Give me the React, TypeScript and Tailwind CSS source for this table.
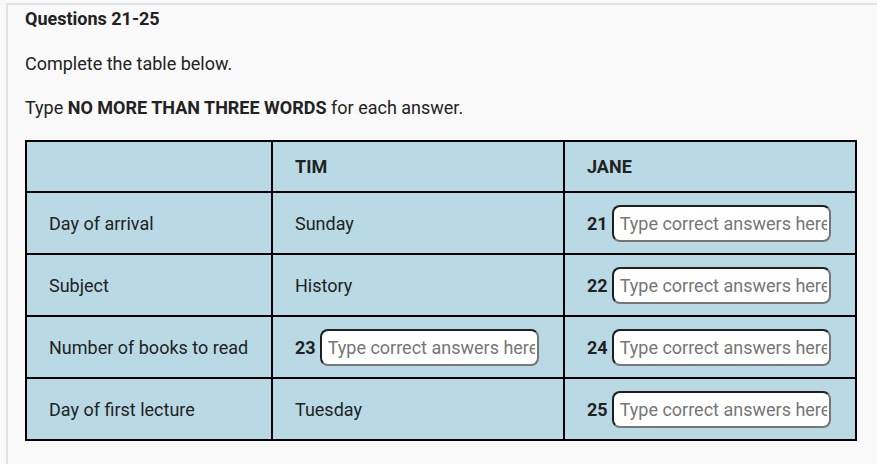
import React from 'react';

type Cell = { text?: string; q?: number };

const rows: { label: string; tim: Cell; jane: Cell }[] = [
  { label: 'Day of arrival', tim: { text: 'Sunday' }, jane: { q: 21 } },
  { label: 'Subject', tim: { text: 'History' }, jane: { q: 22 } },
  { label: 'Number of books to read', tim: { q: 23 }, jane: { q: 24 } },
  { label: 'Day of first lecture', tim: { text: 'Tuesday' }, jane: { q: 25 } },
];

function AnswerCell({ cell }: { cell: Cell }) {
  if (cell.q) {
    return (
      <div className="flex items-center gap-[4px]">
        <span className="font-bold">{cell.q}</span>
        <input
          type="text"
          placeholder="Type correct answers here"
          className="w-[219px] h-[37px] rounded-[8px] border-2 border-t-[#1f1f1f] border-l-[#1f1f1f] border-b-[#767676] border-r-[#767676] bg-white pl-[6px] pr-[2px] text-[18px] text-[#222] placeholder:text-[#767676] outline-none"
        />
      </div>
    );
  }
  return <span>{cell.text}</span>;
}

const cellCls = 'flex items-center border-r-2 border-b-2 border-black pl-[22px]';

export default function App() {
  return (
    <div
      className="min-h-[464px] bg-[#f9f9f9] pt-[3px] pl-[6px] text-[#222]"
      style={{ fontFamily: 'Roboto, "Liberation Sans", sans-serif' }}
    >
      <div className="min-h-[461px] border-t-2 border-l-2 border-[#dfe3e8] pl-[17px] pt-[1px] text-[18px]">
        <h2 className="font-bold text-[18px] leading-[26px]">Questions 21-25</h2>
        <p className="mt-[19px] leading-[26px]">Complete the table below.</p>
        <p className="mt-[18px] leading-[26px]">
          Type <span className="font-bold">NO MORE THAN THREE WORDS</span> for each answer.
        </p>
        <div className="mt-[19px] grid w-[832px] grid-cols-[246px_292px_292px] grid-rows-[51px_62px_62px_62px_62px] border-t-2 border-l-2 border-black bg-[#b9dae5]">
          <div className={cellCls} />
          <div className={`${cellCls} font-bold`}>TIM</div>
          <div className={`${cellCls} font-bold`}>JANE</div>
          {rows.map((r) => (
            <React.Fragment key={r.label}>
              <div className={cellCls}>{r.label}</div>
              <div className={cellCls}>
                <AnswerCell cell={r.tim} />
              </div>
              <div className={cellCls}>
                <AnswerCell cell={r.jane} />
              </div>
            </React.Fragment>
          ))}
        </div>
      </div>
    </div>
  );
}
